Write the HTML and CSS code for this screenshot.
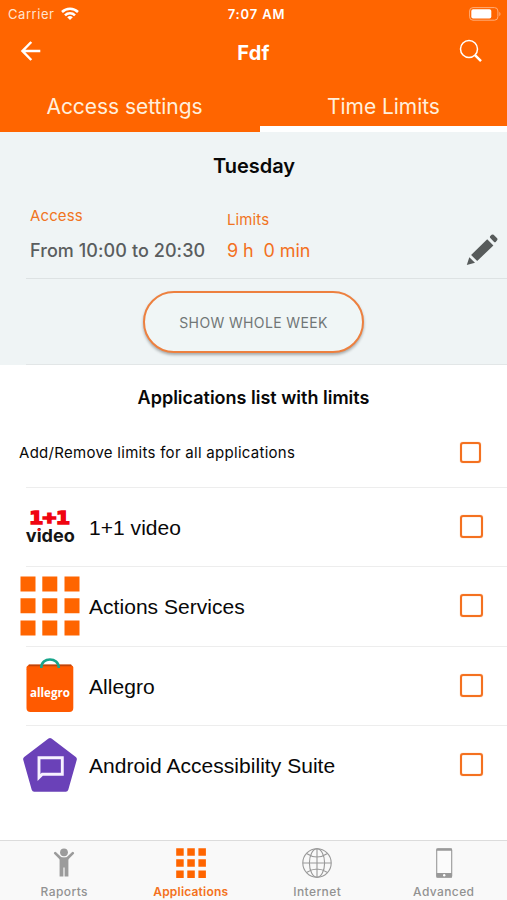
FILE: index.html
```html
<!DOCTYPE html>
<html lang="en">
<head>
<meta charset="utf-8">
<title>Fdf</title>
<link rel="stylesheet" href="styles.css">
</head>
<body>
<header class="header">
  <div class="status">
    <div class="status-left">
      <span class="carrier">Carrier</span>
      <svg class="wifi" width="18" height="14" viewBox="0 0 18 14" fill="none" stroke="#fff" stroke-width="2.5"><path d="M1 5a11.400 11.400 0 0 1 16 0M4 8.300a7 7 0 0 1 10 0"/><path d="M9 13 6.200 10.300a4 4 0 0 1 5.600 0z" fill="#fff" stroke="none"/></svg>
    </div>
    <span class="clock">7:07 AM</span>
    <svg class="battery" width="32" height="14" viewBox="0 0 32 14"><rect x=".6" y=".6" width="28.3" height="12.6" rx="3.4" fill="none" stroke="#ffad78" stroke-width="1"/><rect x="2.3" y="2.2" width="20" height="9.4" rx="1.8" fill="#fff"/><path d="M30.3 4.8a2.6 2.6 0 0 1 0 4.4z" fill="#ffad78"/></svg>
  </div>
  <div class="navbar">
    <svg class="back" width="22" height="22" viewBox="0 0 22 22" fill="none" stroke="#fff" stroke-width="2.5"><path d="M11.3 2 2.5 11l8.800 9M2.500 11H20.300"/></svg>
    <h1 class="title">Fdf</h1>
    <svg class="search" width="24" height="24" viewBox="0 0 24 24" fill="none" stroke="#fff"><circle cx="10" cy="10" r="8.500" stroke-width="1.500"/><path d="m16 16.200 6 6" stroke-width="2.500"/></svg>
  </div>
  <nav class="tabs">
    <span class="tab">Access settings</span>
    <span class="tab tab-active">Time Limits</span>
  </nav>
</header>

<section class="schedule">
  <h2 class="day">Tuesday</h2>
  <div class="day-row">
    <div class="access">
      <div class="label">Access</div>
      <div class="hours">From 10:00 to 20:30</div>
    </div>
    <div class="limits">
      <div class="label">Limits</div>
      <div class="amount">9 h&nbsp; 0 min</div>
    </div>
    <svg class="pencil" width="32" height="32" viewBox="0 0 32 32" fill="#575b5b"><path d="m24.300 2 1.300-1.200q1-.8 2 0l3.500 3.500q.8 1 0 2L29.700 7.900q-.8.600-1.600 0l-3.800-3.800q-.8-1.100 0-2.100zM21.200 5.300l6.200 6.100L11.200 27 5.100 20.900zM3.300 23.200l5.700 5.500L.8 31.100z"/></svg>
  </div>
  <div class="week">
    <button class="week-button">SHOW WHOLE WEEK</button>
  </div>
</section>

<main class="apps">
  <h2 class="apps-title">Applications list with limits</h2>
  <div class="all-row">
    <span class="all-label">Add/Remove limits for all applications</span>
    <span class="checkbox checkbox-small"></span>
  </div>
  <ul class="app-list">
    <li class="app">
      <svg class="app-icon" width="60" height="60" viewBox="0 0 60 60"><text class="logo-one" x="9.500" y="26.800" textLength="40" lengthAdjust="spacingAndGlyphs">1+1</text><text class="logo-video" x="5.800" y="45.300" textLength="49" lengthAdjust="spacingAndGlyphs">video</text><circle cx="18.900" cy="32.800" r="1.500" fill="#f11"/></svg>
      <span class="app-name">1+1 video</span>
      <span class="checkbox"></span>
    </li>
    <li class="app">
      <svg class="app-icon" width="60" height="60" viewBox="0 0 60 60" fill="#ff6500"><path d="M.500.500h15v15h-15zM22.300.500h15v15h-15zM44.500.500h15v15h-15zM.500 22.300h15v15h-15zM22.300 22.300h15v15h-15zM44.500 22.300h15v15h-15zM.500 44.500h15v15h-15zM22.300 44.500h15v15h-15zM44.500 44.500h15v15h-15z"/></svg>
      <span class="app-name">Actions Services</span>
      <span class="checkbox"></span>
    </li>
    <li class="app">
      <svg class="app-icon" width="60" height="60" viewBox="0 0 60 60"><path d="M9 9.500h42l2 5H6.500z" fill="#d34803"/><path d="M6.500 12.500q0-2 2-2h42.800q2 0 2 2V53q0 4-4 4H10.500q-4 0-4-4z" fill="#ff5a00"/><path d="M8.500 10.500h43" stroke="#bd450c" stroke-width="1.500"/><path d="M21.300 13C21 1.600 38.800 1.600 38.800 13" fill="none" stroke="#17a58b" stroke-width="2.600"/><text class="logo-allegro" x="10" y="42" textLength="40" lengthAdjust="spacingAndGlyphs">allegro</text></svg>
      <span class="app-name">Allegro</span>
      <span class="checkbox"></span>
    </li>
    <li class="app">
      <svg class="app-icon" width="60" height="60" viewBox="0 0 60 60"><path d="M28.500 3.500q1.500-1 3 0l24.300 18.600q1.500 1.200.9 3l-8.400 29.600q-.7 2-2.500 2H14.200q-1.800 0-2.500-2L3.300 25.100q-.6-1.800.9-3z" fill="#6a41b8"/><path d="M19 42.500V22.800h23.300v16.400H22.300z" fill="none" stroke="#f7f1ff" stroke-width="2.900"/></svg>
      <span class="app-name">Android Accessibility Suite</span>
      <span class="checkbox"></span>
    </li>
  </ul>
</main>

<footer class="tabbar">
  <div class="item">
    <svg width="32" height="32" viewBox="0 0 32 32" fill="#9b9b9b"><circle cx="16" cy="5.300" r="3.900"/><path d="m7.200 6.100 5.300 5.200q3.500 1.400 7 0l5.300-5.200" fill="none" stroke="#9b9b9b" stroke-width="2.600" stroke-linecap="round"/><path d="M11.600 10.500h8.800v19h-3.800v-9h-1.200v9h-3.800z"/></svg>
    <span>Raports</span>
  </div>
  <div class="item item-active">
    <svg width="32" height="32" viewBox="0 0 32 32" fill="#ff6500"><path d="M1.200 1.200h7.500v7.500H1.200zM12.300 1.200h7.500v7.500h-7.500zM23.400 1.200h7.500v7.500h-7.500zM1.200 12.300h7.500v7.500H1.200zM12.300 12.300h7.500v7.500h-7.500zM23.400 12.300h7.500v7.500h-7.500zM1.200 23.400h7.500v7.500H1.200zM12.300 23.400h7.500v7.500h-7.500zM23.400 23.400h7.500v7.500h-7.500z"/></svg>
    <span>Applications</span>
  </div>
  <div class="item">
    <svg width="32" height="32" viewBox="0 0 32 32" fill="none" stroke="#999" stroke-width="1.100"><circle cx="16" cy="16" r="14.200"/><ellipse cx="16" cy="16" rx="7.600" ry="14.200"/><path d="M16 1.800v28.400M1.800 16h28.400M5.500 6.500Q16 13.500 26.500 6.500M5.500 25.500Q16 18.500 26.500 25.500"/></svg>
    <span>Internet</span>
  </div>
  <div class="item">
    <svg width="32" height="32" viewBox="0 0 32 32"><rect x="8.700" y="1.700" width="15" height="28.600" rx="1.300" fill="#fbfbfb" stroke="#999" stroke-width="1.100"/><path d="M8.500 1.500h15.500v2.200H8.500zM8.500 26h15.500v4.500H8.500z" fill="#999"/><circle cx="16.200" cy="28.300" r="1.200" fill="#fff"/></svg>
    <span>Advanced</span>
  </div>
</footer>
</body>
</html>
```
FILE: styles.css
```css
* { box-sizing: border-box; }

body {
  margin: 0;
  height: 900px;
  display: flex;
  flex-direction: column;
  overflow: hidden;
  background: #fff;
  color: #080808;
  font-family: Inter, "Liberation Sans", sans-serif;
}

h1, h2, ul { margin: 0; padding: 0; }
svg { display: block; flex: none; }
span, h1, h2, .label, .hours, .amount { white-space: nowrap; }

.header { height: 132px; background: #ff6500; color: #fff; }

.status {
  display: grid;
  grid-template-columns: 1fr auto 1fr;
  align-items: center;
  height: 27px;
  padding: 0 6px 0 8px;
  font-size: 13px;
}
.status-left { display: flex; align-items: center; gap: 7px; }
.carrier { letter-spacing: .55px; color: #ffe4cf; }
.clock { font-weight: 600; letter-spacing: .85px; margin-left: 4px; }
.battery { justify-self: end; }

.navbar {
  display: grid;
  grid-template-columns: 1fr auto 1fr;
  align-items: center;
  height: 48px;
  padding: 0 24px 0 20px;
}
.title { font-size: 20px; line-height: 24px; font-weight: 700; padding: 3px 0 0 4px; letter-spacing: .3px; }
.search { justify-self: end; }

.tabs { display: flex; height: 57px; }
.tab {
  width: 247px;
  flex: none;
  padding-top: 18px;
  text-align: center;
  font-size: 21px;
  line-height: 28px;
  letter-spacing: -.05px;
  color: #ffefdc;
}
.tab:first-child { width: 260px; padding-right: 11px; }
.tab-active { border-bottom: 6px solid #fff; }

.schedule {
  height: 233px;
  background: linear-gradient(#e2e6e7, #e2e6e7) 26px 100% / 100% 1px no-repeat #eff4f5;
}
.day { padding-top: 20px; text-align: center; font-size: 20px; line-height: 28px; font-weight: 600; padding-left: 1px; }
.day-row {
  display: flex;
  height: 99px;
  margin-left: 26px;
  padding: 0 9px 0 4px;
  border-bottom: 1px solid #dde2e3;
}
.access { width: 197px; padding-top: 24px; }
.label { font-size: 15px; line-height: 24px; color: #f17422; letter-spacing: .12px; }
.hours { font-size: 18px; font-weight: 500; line-height: 24px; margin-top: 11px; color: #5a5d5e; letter-spacing: .08px; }
.limits { flex: 1; padding-top: 28px; }
.amount { font-size: 18px; line-height: 24px; margin-top: 7px; color: #f37021; letter-spacing: -.08px; }
.pencil { margin-top: 54px; }
.week { display: flex; justify-content: center; padding-top: 12px; }
.week-button {
  width: 221px;
  height: 62px;
  padding: 0;
  border: 2px solid #ed803f;
  border-radius: 31px;
  background: #f0f6f6;
  box-shadow: 0 2px 3px rgba(0, 0, 0, .3);
  color: #717777;
  font: 400 14px Inter, "Liberation Sans", sans-serif;
  letter-spacing: .36px;
}

.apps { flex: 1; }
.apps-title { padding-top: 21px; text-align: center; font-size: 18px; line-height: 24px; font-weight: 600; }
.all-row {
  display: flex;
  align-items: center;
  justify-content: space-between;
  height: 77px;
  padding: 7px 26px 0 19px;
}
.all-label { font-size: 15px; letter-spacing: .28px; }
.app-list { list-style: none; }
.app {
  display: flex;
  align-items: center;
  height: 79.300px;
  padding: 0 24px 0 20px;
  background: linear-gradient(#ededed, #ededed) 26px 0 / 100% 1px no-repeat;
}
.app-name {
  flex: 1;
  margin-left: 9px;
  padding-top: 3px;
  font: 21px "Liberation Sans", Arial, sans-serif;
  letter-spacing: .04px;
}
.checkbox { width: 23px; height: 23px; border: 2px solid #f47120; border-radius: 3px; box-shadow: 0 0 1px #ff9a55, inset 0 0 1px #ff9a55; }
.checkbox-small { width: 21px; height: 21px; }
.logo-one { font: 700 17px "DejaVu Sans Mono", monospace; fill: #f00510; stroke: #f00510; stroke-width: 1.600px; }
.logo-video { font: 700 18px Inter, sans-serif; fill: #151515; }
.logo-allegro { font: 700 13px "Open Sans", sans-serif; fill: #fff; }

.tabbar { display: flex; height: 60px; padding-left: 1px; border-top: 1px solid #dcdcdc; background: #f9f9f9; }
.item {
  flex: 1;
  display: flex;
  flex-direction: column;
  align-items: center;
  padding-top: 6px;
  color: #929292;
  font-size: 12px;
  line-height: 16px;
  font-weight: 500;
  letter-spacing: .4px;
}
.item span { margin-top: 5px; }
.item-active { color: #f47120; font-weight: 600; letter-spacing: .2px; }
```
